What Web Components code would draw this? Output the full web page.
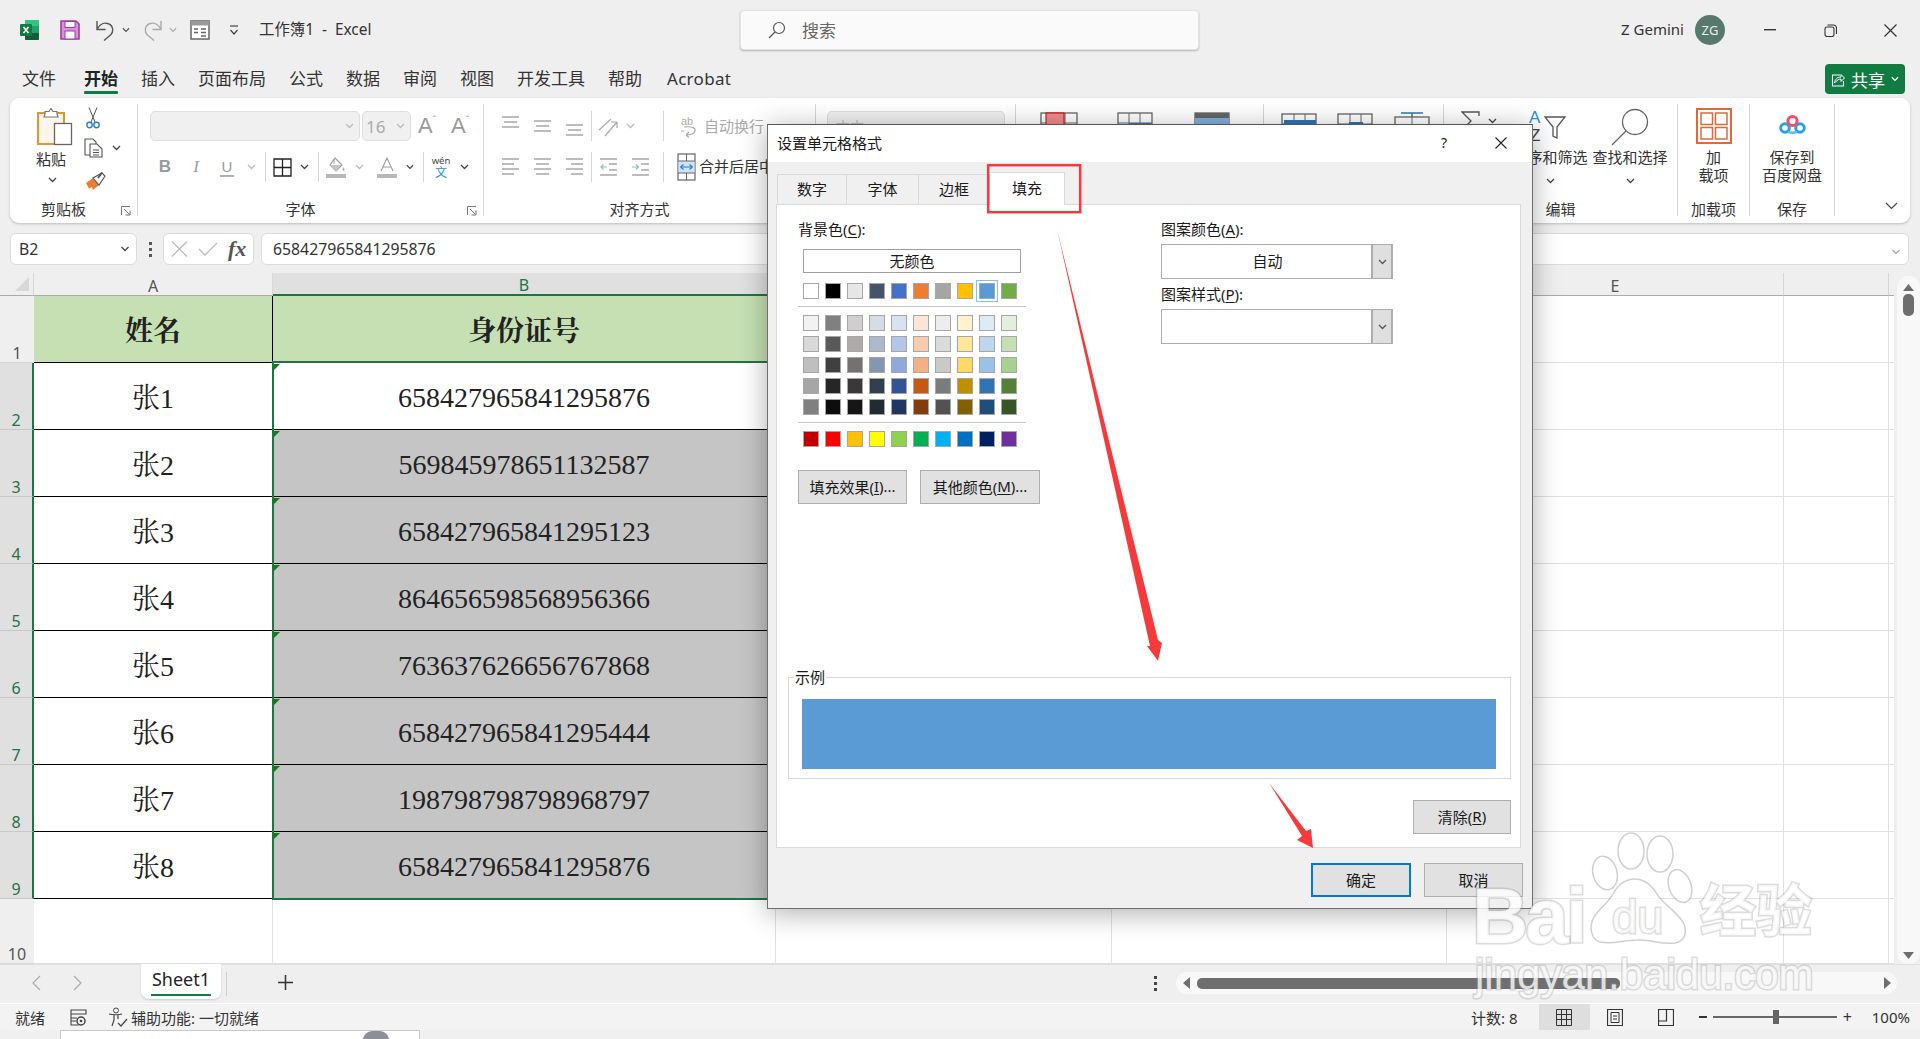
<!DOCTYPE html>
<html lang="zh-CN"><head><meta charset="utf-8"><title>工作簿1 - Excel</title>
<style>
html,body{margin:0;padding:0;width:1920px;height:1039px;overflow:hidden;background:#efefef}
body{font-family:"Noto Sans","Noto Sans CJK SC",sans-serif;color:#262626}
</style></head><body>
<x-app></x-app>
<script>
const F='"Noto Sans","Noto Sans CJK SC",sans-serif';
const chev=(c='#444',w=9)=>`<svg width="${w}" height="6" viewBox="0 0 9 6"><path d="M1 1l3.500 3.500L8 1" fill="none" stroke="${c}" stroke-width="1.300"/></svg>`;
const IC={
excel:`<svg width="20" height="20" viewBox="0 0 20 20"><rect x="5" y="0" width="14" height="20" rx="1" fill="#21a366"/><path d="M5 1a1 1 0 0 1 1-1h12a1 1 0 0 1 1 1v5H5z" fill="#33c481"/><path d="M5 13h14v6a1 1 0 0 1-1 1H6a1 1 0 0 1-1-1z" fill="#185c37"/><rect x="0" y="4" width="12" height="12" rx="1" fill="#107c41"/><path d="M3.500 7l5 6M8.500 7l-5 6" stroke="#fff" stroke-width="1.500"/></svg>`,
save:`<svg width="20" height="20" viewBox="0 0 20 20"><path d="M1 1h15l3 3v15H1z" fill="#d793d7" stroke="#a33ca3" stroke-width="1.600"/><rect x="5" y="1.500" width="10" height="6" fill="#fff" stroke="#a33ca3"/><rect x="5" y="11" width="10" height="8" fill="#fff" stroke="#a33ca3"/></svg>`,
undo:c=>`<svg width="20" height="21" viewBox="0 0 20 21"><path d="M2 1v8.500h8.500M2 9.500C5 4 9 2.500 12.500 3.500 18 5 19 10.500 16 14.500L9 20.500" fill="none" stroke="${c}" stroke-width="1.400"/></svg>`,
redo:c=>`<svg width="20" height="21" viewBox="0 0 20 21"><path d="M18 1v8.500H9.500M18 9.500C15 4 11 2.500 7.500 3.500 2 5 1 10.500 4 14.500l7 6" fill="none" stroke="${c}" stroke-width="1.400"/></svg>`,
form:`<svg width="20" height="20" viewBox="0 0 20 20"><rect x="1" y="1" width="18" height="18" fill="#fff" stroke="#666" stroke-width="1.500"/><rect x="1" y="1" width="18" height="4.500" fill="#999"/><path d="M4 9h4M11 9h5M4 12.500h4M11 12.500h5M11 16h5" stroke="#666" stroke-width="1.500"/></svg>`,
custom:`<svg width="10" height="11" viewBox="0 0 10 11"><path d="M1 1h8" stroke="#444" stroke-width="1.200"/><path d="M1.500 5l3.500 4 3.500-4" fill="none" stroke="#444" stroke-width="1.200"/></svg>`,
search:`<svg width="18" height="18" viewBox="0 0 18 18"><circle cx="11" cy="7" r="5.500" fill="none" stroke="#555" stroke-width="1.200"/><path d="M7 11l-6 6" stroke="#555" stroke-width="1.300"/></svg>`,
min:`<svg width="12" height="2"><rect width="12" height="1.400" fill="#333"/></svg>`,
restore:`<svg width="13" height="13" viewBox="0 0 13 13"><rect x="1" y="3" width="9" height="9.500" rx="2" fill="none" stroke="#333" stroke-width="1.100"/><path d="M3.500 1h6a3 3 0 0 1 3 3v6" fill="none" stroke="#333" stroke-width="1.100"/></svg>`,
close:`<svg width="13" height="13" viewBox="0 0 13 13"><path d="M.500.500l12 12M12.500.500l-12 12" stroke="#333" stroke-width="1.200"/></svg>`,
share:`<svg width="14" height="15" viewBox="0 0 14 15"><path d="M9 3H1.500v11h11V9" fill="none" stroke="#fff" stroke-width="1.100"/><path d="M3.500 11C4 7 6.500 5 10 5V2.500L13.500 6 10 9.500V7C8 7 6 8 3.500 11z" fill="#107c41" stroke="#fff" stroke-width="1"/></svg>`,
paste:`<svg width="36" height="38" viewBox="0 0 36 38"><rect x="1" y="5" width="26" height="31" fill="#fdf6ec" stroke="#e8912d" stroke-width="2"/><path d="M8 6V3.500h4L14 .500l2 3h4V6l1 3H7z" fill="#fff" stroke="#777" stroke-width="1.200"/><rect x="17.500" y="15.500" width="17" height="21" fill="#fff" stroke="#666" stroke-width="1.300"/></svg>`,
cut:`<svg width="16" height="22" viewBox="0 0 16 22"><path d="M4 .500L10 15M12 .500L6 15" stroke="#555" stroke-width="1"/><circle cx="4.500" cy="18" r="2.700" fill="none" stroke="#2b7cd3" stroke-width="1.400"/><circle cx="11.500" cy="18" r="2.700" fill="none" stroke="#2b7cd3" stroke-width="1.400"/></svg>`,
copy:`<svg width="20" height="20" viewBox="0 0 20 20"><path d="M1 1h8l3 3v13H1z" fill="#fff" stroke="#555" stroke-width="1.100"/><path d="M6 6h7l5 5v8H6z" fill="#fff" stroke="#555" stroke-width="1.100"/><path d="M9 12h6M9 14.500h6M9 17h6" stroke="#555"/></svg>`,
painter:`<svg width="21" height="20" viewBox="0 0 21 20"><path d="M1 12l7-5 6 7-6 5-1-3-3 1.500z" fill="#ed7d31"/><path d="M8 7l6 7 6-9-3-3z" fill="#fff" stroke="#555" stroke-width="1.100"/><path d="M13 7l4-5.500" stroke="#555" stroke-width="2"/></svg>`,
launch:`<svg width="10" height="10" viewBox="0 0 10 10"><path d="M.500 9V.500H9M3 3l5.500 5.500M9 4.500V9H4.500" fill="none" stroke="#777"/></svg>`,
borders:`<svg width="19" height="19" viewBox="0 0 19 19"><path d="M1 1h17v17H1zM9.500 1v17M1 9.500h17" fill="none" stroke="#222" stroke-width="1.300"/></svg>`,
bucket:`<svg width="20" height="21" viewBox="0 0 20 21"><path d="M9 1l7 7-6 6-6-6z" fill="#fff" stroke="#a0a0a0" stroke-width="1.200"/><path d="M8 2v5" stroke="#a0a0a0"/><path d="M4 8h11l-5 6z" fill="#c6c6c6"/><path d="M17 10c1 2 2 3 1 4-1 0-2-1-1-4z" fill="#a8a8a8"/><rect y="17" width="20" height="4" fill="#b8b8b8"/></svg>`,
fontc:`<svg width="20" height="21" viewBox="0 0 20 21"><path d="M4 14L10 1l6 13M6 10h8" fill="none" stroke="#9c9c9c" stroke-width="1.100"/><rect y="17" width="20" height="4" fill="#b8b8b8"/></svg>`,
abw:`<svg width="18" height="24" viewBox="0 0 18 24"><text x="1" y="11" font-family="Liberation Sans" font-size="11" fill="#aaa">ab</text><path d="M4 13c8-1 12 1 11 4s-4 4-9 4m0 0l3-3m-3 3l3 2.500M1 17h3" fill="none" stroke="#aaa" stroke-width="1.100"/></svg>`,
merge:`<svg width="19" height="28" viewBox="0 0 19 28"><rect x="1" y="1" width="17" height="26" fill="#fff" stroke="#666" stroke-width="1.200"/><rect x="1.500" y="8" width="16" height="12" fill="#cfe3f7"/><path d="M1 8h17M1 20h17M9.500 1v7M9.500 20v7" stroke="#666"/><path d="M3.500 14h12M3.500 14l3-2.500M3.500 14l3 2.500M15.500 14l-3-2.500M15.500 14l-3 2.500" fill="none" stroke="#2b7cd3" stroke-width="1.200"/></svg>`,
orient:`<svg width="22" height="24" viewBox="0 0 22 24"><path d="M2 16L14 5M8 22L20 8M20 8v6M20 8h-6" fill="none" stroke="#aaa" stroke-width="1.200"/></svg>`,
sigma:`<svg width="19" height="20" viewBox="0 0 19 20"><path d="M18 5V1H1l9 9-9 9h17v-4" fill="none" stroke="#555" stroke-width="1.300"/></svg>`,
azf:`<svg width="42" height="38" viewBox="0 0 42 38"><text x="0" y="15" font-family="Liberation Sans" font-size="17" fill="#2b8fd8">A</text><text x="1" y="33" font-family="Liberation Sans" font-size="17" fill="#444">Z</text><path d="M16 9h20L28 19v11l-4-2v-9z" fill="#fff" stroke="#555" stroke-width="1.300"/></svg>`,
find:`<svg width="38" height="38" viewBox="0 0 38 38"><circle cx="24" cy="14" r="12.500" fill="none" stroke="#666" stroke-width="1.300"/><path d="M15 23L1 37" stroke="#666" stroke-width="1.300"/></svg>`,
addin:`<svg width="36" height="36" viewBox="0 0 36 36"><rect x="1" y="1" width="34" height="34" fill="none" stroke="#e0693c" stroke-width="2"/><g fill="#fff" stroke="#e0693c" stroke-width="1.500"><rect x="5" y="5" width="11.500" height="11.500"/><rect x="19.500" y="5" width="11.500" height="11.500"/><rect x="5" y="19.500" width="11.500" height="11.500"/><rect x="19.500" y="19.500" width="11.500" height="11.500"/></g></svg>`,
baidu:`<svg width="27" height="21" viewBox="0 0 27 21"><circle cx="6" cy="14" r="4.300" fill="none" stroke="#2aa0e8" stroke-width="3"/><circle cx="21" cy="14" r="4.300" fill="none" stroke="#2aa0e8" stroke-width="3"/><path d="M9 18c3 1 6 1 9 0" stroke="#5cc0f0" stroke-width="2.500" fill="none"/><circle cx="13.500" cy="7" r="4.600" fill="none" stroke="#ef4f6c" stroke-width="3"/></svg>`,
st:(b)=>`<svg width="38" height="34" viewBox="0 0 38 34">${b}</svg>`,
};
class Base extends HTMLElement{
  constructor(){super();const C=this.constructor;
    this.attachShadow({mode:'open'}).innerHTML=`<style>*{box-sizing:border-box}${C.css||''}</style>${C.html||''}`;}
}
class XTitle extends Base{
static css=`:host{display:flex;height:60px;align-items:center;font-size:15.400px;color:#333}
.l{flex:0 0 740px;display:flex;align-items:center;padding-left:20px}
.l span{display:flex;align-items:center}
.s{flex:0 0 459px;height:40px;background:#fafafa;border-radius:4px;box-shadow:0 1px 2px rgba(0,0,0,.25);border:1px solid #e3e3e3;display:flex;align-items:center;padding-left:27px;gap:16px;color:#666;font-size:17px}
.s span{padding-bottom:2px}
.r{flex:1;display:flex;align-items:center;justify-content:flex-end}
.u{margin-right:11px;font-size:15px;padding-bottom:2px}
.a{width:30px;height:30px;border-radius:50%;background:#56786d;color:#e6efec;font-size:13px;display:flex;align-items:center;justify-content:center;margin-right:15px}
.w{width:60px;display:flex;justify-content:center}`;
static html=`<div class="l"><span>${IC.excel}</span><span style="margin-left:20px">${IC.save}</span><span style="margin-left:15px">${IC.undo('#555')}</span><span style="margin-left:7px">${chev('#555',8)}</span><span style="margin-left:13px">${IC.redo('#aaa')}</span><span style="margin-left:6px">${chev('#aaa',8)}</span><span style="margin-left:13px">${IC.form}</span><span style="margin-left:19px">${IC.custom}</span><span style="margin-left:20px;padding-bottom:3px">工作簿1&nbsp; - &nbsp;Excel</span></div>
<div class="s">${IC.search}<span>搜索</span></div>
<div class="r"><span class="u">Z Gemini</span><span class="a">ZG</span><span class="w">${IC.min}</span><span class="w">${IC.restore}</span><span class="w">${IC.close}</span></div>`;
}
class XMenu extends Base{
static css=`:host{display:flex;height:38px;align-items:center;padding-left:22px;font-size:17px;color:#333;gap:23px}
.t{position:relative;line-height:24px;white-space:nowrap}
.on{font-weight:700;color:#222}
.on::after{content:"";position:absolute;left:0;right:0;bottom:-3px;height:3px;background:#107c41;border-radius:1px}
.sh{margin-left:auto;margin-right:15px;width:80px;height:30px;background:#107c41;border-radius:4px;color:#fff;display:flex;align-items:center;justify-content:center;gap:6px;font-size:17px}`;
static html=`<span class="t" style="margin-right:5px">文件</span><span class="t on">开始</span><span class="t">插入</span><span class="t">页面布局</span><span class="t">公式</span><span class="t">数据</span><span class="t">审阅</span><span class="t">视图</span><span class="t">开发工具</span><span class="t" style="margin-right:2px">帮助</span><span class="t" style="letter-spacing:.3px">Acrobat</span>
<div class="sh">${IC.share}<span>共享</span>${chev('#fff',8)}</div>`;
}
class XGroup extends Base{
static css=`:host{display:flex;flex-direction:column;height:112px;border-right:1px solid #d6d6d6;flex:none;font-size:15px;color:#333}
.c{flex:1;min-height:0;display:flex;flex-direction:column}
.b{height:18px;display:flex;align-items:center;margin-bottom:-2px;line-height:18px}
.lb{flex:1;text-align:center;white-space:nowrap}
.lc{width:20px;display:flex;align-items:flex-end;height:14px;padding-left:4px}`;
static html=`<div class="c"><slot></slot></div><div class="b"><span class="lb"></span><span class="lc"></span></div>`;
connectedCallback(){const r=this.shadowRoot;r.querySelector('.lb').textContent=this.getAttribute('label')||'';
 if(this.hasAttribute('launcher'))r.querySelector('.lc').innerHTML=IC.launch;else r.querySelector('.lc').remove();}
}
const cell=(w,h)=>`<span class="i" style="width:${w}px">${h}</span>`;
const dv=w=>`<span class="i" style="width:${w}px"><i class="dv"></i></span>`;
const lines=(kind,pos)=>{
 const ys={t:[2,7,12],m:[6,11,16],b:[10,15,20]}[pos];
 return `<svg width="19" height="22" viewBox="0 0 19 22"><path d="M1 ${ys[0]}h17M3 ${ys[1]}h13M1 ${ys[2]}h17" stroke="#a8a8a8" stroke-width="1.300"/></svg>`};
const hl=a=>{const p=a=='l'?[[1,17],[1,12],[1,17],[1,12]]:a=='c'?[[1,17],[3,13],[1,17],[3,13]]:[[1,17],[6,12],[1,17],[6,12]];
 return `<svg width="19" height="22" viewBox="0 0 19 22"><path d="${p.map((q,i)=>`M${q[0]} ${3+i*5}h${q[1]}`).join('')}" stroke="#a8a8a8" stroke-width="1.300"/></svg>`};
const ind=d=>`<svg width="19" height="22" viewBox="0 0 19 22"><path d="M1 3h17M1 19h17M10 8h8M10 14h8" stroke="#a8a8a8" stroke-width="1.300"/><path d="${d?'M1 11h6M5 8.500l2.500 2.500L5 13.500':'M8 11H2M4.500 8.500L2 11l2.500 2.500'}" fill="none" stroke="#8fb8dd" stroke-width="1.200"/></svg>`;
class XRibbon extends Base{
static css=`:host{display:flex;height:125px;margin:0 10px;background:#fff;border-radius:9px;box-shadow:0 1px 3px rgba(0,0,0,.22);padding:6px 0 7px;font-size:15px;color:#333}
.row{display:flex;align-items:center;height:30px;flex:none}
.r1{margin-top:7px}.r2{margin-top:11px}
.i{display:flex;align-items:center;justify-content:center;height:30px;flex:none;position:relative}
.dv{display:block;width:1px;height:30px;background:#d6d6d6}
.combo{height:30px;background:#f0f0f0;border:1px solid #dedede;border-radius:5px;display:flex;align-items:center;justify-content:flex-end;padding-right:5px;flex:none;color:#aaa;font-size:17px}
.big{display:flex;flex-direction:column;align-items:center;flex:none;line-height:18px;white-space:nowrap}
.ico{height:44px;display:flex;align-items:flex-start;justify-content:center;padding-top:4px}
.col{display:flex;flex-direction:column;align-items:center;flex:none}
.B{font:700 17px "Liberation Sans";color:#9a9a9a}.I{font:italic 17px "Liberation Serif";color:#9a9a9a}.U{font:15px "Liberation Sans";color:#9a9a9a;border-bottom:2px solid #b0b0b0;line-height:17px;padding:0 2px}
.g{color:#aaa;white-space:nowrap}.d{white-space:nowrap}
.up{font:22px "Liberation Sans";color:#9a9a9a}.up small{font-size:10px;vertical-align:9px}
.wen{display:flex;flex-direction:column;align-items:center;font-size:9.500px;line-height:11px;color:#444}.wen b{font-weight:400;font-size:12px;color:#2b8fd8;line-height:13px}
.end{flex:1;display:flex;align-items:flex-end;justify-content:flex-end;padding:0 12px 6px 0}`;
static html=`
<x-group label="剪贴板" launcher style="width:128px"><div style="display:flex">
  <div class="big" style="width:80px;padding-left:10px;align-items:flex-start"><div class="ico" style="padding-left:17px;height:46px">${IC.paste}</div><span style="margin-left:16px">粘贴</span><span style="margin-left:28px;margin-top:2px;line-height:14px">${chev()}</span></div>
  <div class="col" style="width:40px;align-items:flex-start;padding-top:3px"><span style="height:26px;margin-left:-5px">${IC.cut}</span><span style="height:30px;display:flex;align-items:center;gap:8px;margin-left:-6px">${IC.copy}${chev()}</span><span style="margin-left:-5px;padding-top:8px">${IC.painter}</span></div>
</div></x-group>
<x-group label="字体" launcher style="width:346px">
  <div class="row r1" style="padding-left:12px"><span class="combo" style="width:210px">${chev('#bbb')}</span><span class="combo" style="width:49px;margin-left:2px;justify-content:space-between;padding-left:3px;">16${chev('#bbb')}</span>${cell(32,'<span class="up">A<small>ˆ</small></span>')}${cell(34,'<span class="up">A<small>ˇ</small></span>')}</div>
  <div class="row r2" style="padding-left:12px">${cell(30,'<span class="B">B</span>')}${cell(32,'<span class="I">I</span>')}${cell(30,'<span class="U">U</span>')}${cell(18,chev('#bbb'))}${dv(10)}${cell(24,IC.borders)}${cell(20,chev())}${dv(8)}${cell(28,IC.bucket)}${cell(18,chev('#bbb'))}${cell(38,IC.fontc)}${cell(8,chev('#444',8))}${dv(18)}${cell(18,'<span class="wen">wén<b>文</b></span>')}${cell(28,chev())}</div>
</x-group>
<x-group label="对齐方式" launcher style="width:332px">
  <div class="row r1" style="padding-left:10px">${cell(32,lines(0,'t'))}${cell(32,lines(0,'m'))}${cell(32,lines(0,'b'))}${dv(2)}${cell(32,IC.orient)}${cell(12,chev('#bbb'))}${dv(54)}<span class="i" style="width:22px;margin-left:-12px;margin-right:4px">${IC.abw}</span><span class="g" style="padding-bottom:2px">自动换行</span></div>
  <div class="row r2" style="padding-left:10px">${cell(32,hl('l'))}${cell(32,hl('c'))}${cell(32,hl('r'))}${dv(2)}${cell(32,ind(0))}${cell(32,ind(1))}${dv(14)}<span class="i" style="width:26px;margin-left:3px">${IC.merge}</span><span class="d" style="padding-bottom:3px">合并后居中</span></div>
</x-group>
<x-group style="width:200px"><div class="row r1" style="padding-left:11px"><span class="combo" style="width:178px;justify-content:flex-start;padding-left:8px;font-size:14px;color:#bbb">文本</span></div></x-group>
<x-group style="width:248px"><div style="display:flex;padding:8px 0 0 24px;gap:39px">
  ${IC.st('<rect x="1" y="1" width="36" height="32" fill="none" stroke="#666" stroke-width="1.300"/><path d="M12 1v32M25 1v32M1 11h36" stroke="#666"/><rect x="6" y="1" width="18" height="18" fill="#f08a8a" stroke="#c00"/><rect x="6" y="19" width="18" height="14" fill="#2e75b6"/>')}
  ${IC.st('<rect x="1" y="1" width="34" height="32" fill="none" stroke="#666" stroke-width="1.300"/><path d="M12 1v32M23 1v32M1 11h34" stroke="#666"/><rect x="12" y="11" width="22" height="10" fill="#2e75b6"/>')}
  ${IC.st('<rect x="1" y="1" width="34" height="32" fill="none" stroke="#666" stroke-width="1.300"/><rect x="1" y="1" width="34" height="5" fill="#666"/><rect x="1" y="6" width="34" height="14" fill="#7fb0dd"/>')}
</div></x-group>
<x-group style="width:180px"><div style="display:flex;padding:8px 0 0 17px;gap:18px">
  ${IC.st('<rect x="1" y="2" width="34" height="30" fill="none" stroke="#666" stroke-width="1.300"/><path d="M13 2v30M24 2v30M1 12h34" stroke="#666"/><rect x="3" y="8" width="32" height="8" fill="#2e75b6"/>')}
  ${IC.st('<rect x="1" y="2" width="34" height="30" fill="none" stroke="#666" stroke-width="1.300"/><path d="M13 2v30M24 2v30M1 12h34" stroke="#666"/><rect x="12" y="10" width="14" height="12" fill="#2e75b6"/><path d="M26 12l8 10M34 12l-8 10" stroke="#d33" stroke-width="1.300"/>')}
  ${IC.st('<path d="M8 1h22M19 1v4" stroke="#2e75b6" stroke-width="1.500"/><rect x="2" y="5" width="34" height="28" fill="none" stroke="#666" stroke-width="1.300"/><path d="M19 5v28M2 13h34" stroke="#666"/><rect x="11" y="13" width="16" height="10" fill="#2e75b6"/>')}
</div></x-group>
<x-group label="编辑" style="width:234px"><div style="display:flex">
  <div style="width:67px;display:flex;align-items:center;height:32px;padding-left:17px;gap:8px;margin-top:1px;flex:none">${IC.sigma}${chev()}</div>
  <div class="big" style="width:78px"><div class="ico">${IC.azf}</div><span>排序和筛选</span><span style="line-height:24px">${chev()}</span></div>
  <div class="big" style="width:78px;margin-left:2px"><div class="ico">${IC.find}</div><span>查找和选择</span><span style="line-height:24px">${chev()}</span></div>
</div></x-group>
<x-group label="加载项" style="width:72px"><div class="big"><div class="ico">${IC.addin}</div><span>加</span><span>载项</span></div></x-group>
<x-group label="保存" style="width:85px"><div class="big"><div class="ico" style="padding-top:10px">${IC.baidu}</div><span>保存到</span><span>百度网盘</span></div></x-group>
<div class="end"><svg width="13" height="8" viewBox="0 0 13 8"><path d="M1 1l5.500 5.500L12 1" fill="none" stroke="#444" stroke-width="1.200"/></svg></div>`;
}
class XFormula extends Base{
static css=`:host{display:flex;height:32px;margin:10px 11px 8px 10px;font-size:15.800px;color:#333}
.b{background:#fff;border:1px solid #dcdcdc;border-radius:6px;display:flex;align-items:center;height:32px}
.n{width:127px;padding:0 5px 0 8px;justify-content:space-between}
.dots{width:26px;display:flex;flex-direction:column;align-items:center;justify-content:center;gap:3px}.dots i{width:3px;height:3px;background:#555;display:block}
.fx{width:91px;padding-left:7px;gap:10px}
.f{flex:1;margin-left:7px;padding:0 11px;justify-content:space-between}
.fxt{font:italic 700 22px "Liberation Serif";color:#555;line-height:22px}`;
static html=`<div class="b n"><span>B2</span>${chev('#444',12)}</div><div class="dots"><i></i><i></i><i></i></div>
<div class="b fx"><svg width="17" height="16" viewBox="0 0 17 16"><path d="M1 .500l15 15M16 .500l-15 15" stroke="#bbb" stroke-width="1.300"/></svg><svg width="20" height="14" viewBox="0 0 20 14"><path d="M1 7l6 6L19 1" fill="none" stroke="#bbb" stroke-width="1.300"/></svg><span class="fxt">fx</span></div>
<div class="b f"><span>658427965841295876</span><span style="margin-right:-5px">${chev('#aaa',12)}</span></div>`;
}
class XSheet extends Base{
static css=`:host{display:flex;height:691px;position:relative;flex:none}
.g{display:grid;width:1894px;grid-template-columns:34px 239px 503px 336px 335px 337px 105px 5px;grid-template-rows:23px repeat(9,67px) 65px;background:#fff}
.c{border-right:1px solid #e0e0e0;border-bottom:1px solid #e0e0e0;display:flex;align-items:center;justify-content:center;font:28px "Liberation Serif","Noto Serif CJK SC","Noto Sans CJK SC",serif;color:#222;padding-top:3px;position:relative;background:#fff}
.k{border-right:1px solid #000;border-bottom:1px solid #000}
.nm{padding-top:0}
.hd{background:#c6e0b4;font-weight:700;padding-top:0}
.gy{background:#c5c5c5}
.tri::before{content:"";position:absolute;left:1px;top:1px;border-top:6px solid #117a11;border-right:6px solid transparent}
.ch{background:#efefef;border-bottom:1px solid #ababab;border-right:1px solid #d6d6d6;font:16px ${F};color:#555;display:flex;align-items:flex-end;justify-content:center;line-height:18px}
.ch.s{background:#e0e0e0;border-bottom:2px solid #217346;color:#217346}
.rh{background:#efefef;border-bottom:1px solid #d6d6d6;font:16px ${F};color:#555;display:flex;align-items:flex-end;justify-content:center;line-height:18px}
.rh.s{background:#e0e0e0;color:#217346;border-right:2px solid #217346;border-bottom-color:#c8c8c8}
.cn{background:#efefef;display:flex;align-items:flex-end;justify-content:flex-end;padding:0 3px 3px 0;border-bottom:1px solid #ababab;border-right:1px solid #d6d6d6}
.sel{position:absolute;left:272px;top:88px;width:504px;height:539px;border:2px solid #217346;pointer-events:none}
.vs{width:26px;display:flex;flex-direction:column;align-items:center;background:#efefef}
.tr{margin:3px 0 0 3px;width:23px;flex:1;background:#f8f8f8;border-radius:11px;display:flex;flex-direction:column;align-items:center;padding:8px 0 5px}
.th{width:11px;height:22px;background:#6e6e6e;border-radius:5px;margin-top:3px}`;
static html=`<div class="g" id="g"></div><div class="sel"></div><div class="vs"><div class="tr"><svg width="11" height="7"><path d="M5.500 0L11 7H0z" fill="#6e6e6e"/></svg><div class="th"></div><div style="flex:1"></div><svg width="11" height="7"><path d="M5.500 7L11 0H0z" fill="#6e6e6e"/></svg></div></div>`;
connectedCallback(){
 const data=[['姓名','身份证号'],['张1','658427965841295876'],['张2','569845978651132587'],['张3','658427965841295123'],['张4','864656598568956366'],['张5','763637626656767868'],['张6','658427965841295444'],['张7','198798798798968797'],['张8','658427965841295876']];
 let h=`<div class="cn"><svg width="16" height="16"><path d="M15 1v14H1z" fill="#d8d8d8"/></svg></div>`;
 ['A','B','C','D','E','',''].forEach((t,i)=>h+=`<div class="ch${i==1?' s':''}"${i==6?' style="border-right:0"':''}>${t}</div>`);
 for(let r=0;r<10;r++){
  h+=`<div class="rh${r>=1&&r<=8?' s':''}">${r+1}</div>`;
  for(let c=0;c<7;c++){
   let cls='c',t='';
   if(r<9&&c<2){cls+=' k';t=data[r][c];if(r==0)cls+=' hd';else if(c==0)cls+=' nm';else{cls+=' tri';if(r>1)cls+=' gy';}}
   if(c==6)cls+='" style="border-right:0';
   h+=`<div class="${cls}">${t}</div>`;
  }
 }
 this.shadowRoot.getElementById('g').innerHTML=h;
}
}
class XTabs extends Base{
static css=`:host{display:flex;height:39px;align-items:flex-start;position:relative;flex:none;background:#efefef;border-top:1px solid #e0e0e0;font-size:18px;color:#222}
.nav{width:141px;display:flex;padding-left:32px;gap:32px;height:36px;align-items:center}
.tab{width:80px;height:35px;margin-top:-1px;background:#fff;border-radius:0 0 8px 8px;box-shadow:0 1px 2px rgba(0,0,0,.15);position:relative;display:flex;justify-content:center;padding-top:2px;line-height:26px}
.tab::after{content:"";position:absolute;left:10px;right:10px;bottom:3px;height:2px;background:#107c41}
.sp{width:1px;height:24px;margin:7px 0 0 5px;background:#d0d0d0}
.pl{margin:10px 0 0 51px}
.rg{margin-left:auto;display:flex;align-items:center;height:36px}
.dots{display:flex;flex-direction:column;gap:3px;margin-right:19px}.dots i{display:block;width:3px;height:3px;background:#444}
.hs{width:721px;height:22px;background:#f8f8f8;border-radius:11px;display:flex;align-items:center;padding:0 6px 0 7px;margin-right:23px;margin-top:0}
.th{width:423px;height:11px;background:#6e6e6e;border-radius:5px;margin-left:7px}`;
static html=`<div class="nav"><svg width="9" height="16" viewBox="0 0 9 16"><path d="M8 1L1 8l7 7" fill="none" stroke="#aaa" stroke-width="1.200"/></svg><svg width="9" height="16" viewBox="0 0 9 16"><path d="M1 1l7 7-7 7" fill="none" stroke="#aaa" stroke-width="1.200"/></svg></div>
<div class="tab">Sheet1</div><div class="sp"></div>
<svg class="pl" width="15" height="15" viewBox="0 0 15 15"><path d="M7.500 0v15M0 7.500h15" stroke="#333" stroke-width="1.500"/></svg>
<div class="rg"><div class="dots"><i></i><i></i><i></i></div><div class="hs"><svg width="7" height="12"><path d="M0 6l7-6v12z" fill="#6e6e6e"/></svg><div class="th"></div><div style="flex:1"></div><svg width="7" height="12"><path d="M7 6L0 0v12z" fill="#6e6e6e"/></svg></div></div>`;
}
class XStatus extends Base{
static css=`:host{display:flex;height:27px;background:#f3f3f3;align-items:center;font-size:15px;color:#333;padding-left:15px;flex:none;border-top:1px solid #fff}
.a{display:flex;align-items:center}
.r{margin-left:auto;display:flex;align-items:center;height:100%}
.vb{width:51px;height:26px;display:flex;align-items:center;justify-content:center}
.on{background:#dedede}
.sl{width:124px;height:2px;background:#666;position:relative;margin:0 6px}
.sl i{position:absolute;left:60px;top:-6px;width:6px;height:14px;background:#666}`;
static html=`<span>就绪</span>
<span class="a" style="margin-left:25px"><svg width="17" height="17" viewBox="0 0 17 17"><path d="M1 1h15v4H1zM1 5v11h8M1 9h6M1 12h5" fill="none" stroke="#444" stroke-width="1.100"/><circle cx="11" cy="12" r="4" fill="none" stroke="#444" stroke-width="1.500"/><circle cx="11" cy="12" r="1.300" fill="#444"/></svg></span>
<span class="a" style="margin-left:21px;gap:3px"><svg width="20" height="20" viewBox="0 0 20 20"><circle cx="8" cy="3.500" r="2.500" fill="none" stroke="#444"/><path d="M1 7c3 1 11 1 13 0M6 8v5l-2 6M10 8v4" fill="none" stroke="#444" stroke-width="1.200"/><path d="M10 16l3 3 6-7" fill="none" stroke="#444" stroke-width="1.200"/></svg>辅助功能: 一切就绪</span>
<div class="r"><span style="margin-right:21px">计数: 8</span>
<span class="vb on"><svg width="16" height="17" viewBox="0 0 16 17"><path d="M.500.500h15v16H.500zM5.500.500v16M10.500.500v16M.500 5.500h15M.500 10.500h15" fill="none" stroke="#333"/></svg></span>
<span class="vb"><svg width="16" height="17" viewBox="0 0 16 17"><path d="M.500.500h15v16H.500z" fill="none" stroke="#333" stroke-width="1.200"/><path d="M4 3.500h8v10H4zM6 7h4M6 10h4" fill="none" stroke="#333"/></svg></span>
<span class="vb"><svg width="16" height="17" viewBox="0 0 16 17"><path d="M.500.500h15v16H.500zM.500 12h8V.500" fill="none" stroke="#333" stroke-width="1.200"/></svg></span>
<span style="width:8px;height:1.500px;background:#333;margin-left:7px"></span><span class="sl"><i></i></span><span style="font-size:16px;line-height:16px">+</span><span style="margin:0 10px 0 20px">100%</span></div>`;
}
class XBottom extends Base{
static css=`:host{display:block;height:9px;background:#f0f0f0;position:relative;flex:none;padding-left:60px}
.b{width:360px;height:9px;background:#fff;border:1px solid #c8c8c8;border-bottom:0;display:flex;justify-content:flex-end;padding-right:30px}
.c{width:26px;height:9px;border-radius:13px 13px 0 0;background:#8b8f96}`;
static html=`<div class="b"><div class="c"></div></div>`;
}
class XDialog extends Base{
static css=`:host{position:absolute;left:767px;top:124px;width:766px;height:785px;background:#f0f0f0;border:1px solid #6f6f6f;border-top-color:#555;box-shadow:0 4px 26px rgba(0,0,0,.32);display:flex;flex-direction:column;font-size:15px;color:#1a1a1a;z-index:5}
.tb{height:37px;background:#fff;display:flex;align-items:center;padding:0 0 2px 9px;font-size:15px;flex:none}
.tb .q{margin-left:auto;font-size:14px;margin-right:48px}.tb svg{margin-right:25px}
.tabs{display:flex;height:42px;padding-left:9px;align-items:flex-end;flex:none;position:relative;z-index:1}
.t{height:30px;border:1px solid #d9d9d9;border-bottom:0;border-left:0;display:flex;align-items:center;justify-content:center;background:#f0f0f0;padding-bottom:2px}
.t.on{height:33px;margin-bottom:-1px;background:#fff;border-top:1px solid #d9d9d9;padding-bottom:3px}
.p{margin-left:8px;width:745px;height:644px;background:#fff;border:1px solid #d9d9d9;display:flex;flex-direction:column;flex:none}
.top{height:472px;padding:15px 0 0 21px;display:flex;flex:none}
.lc{width:363px;flex:none}.rc{width:232px;flex:none}
.lab{line-height:18px;height:18px;white-space:nowrap}
u{text-underline-offset:2px}
.none{margin:11px 0 0 5px;width:218px;height:24px;border:1px solid #a0a0a0;display:flex;align-items:center;justify-content:center;padding-bottom:2px}
.sw{display:grid;grid-template-columns:repeat(10,16px);column-gap:6px;row-gap:5px;margin-left:5px}
.sw i{display:block;width:16px;height:16px;border:1px solid #a6a6a6;position:relative}
.sw i.x{outline:1px solid #7cc0f5;outline-offset:2px;background-clip:padding-box}
.sep{width:228px;height:1px;background:#c6c6c6}
.btn{background:#e1e1e1;border:1px solid #adadad;display:flex;align-items:center;justify-content:center;white-space:nowrap;flex:none;padding-bottom:2px}
.sel{width:232px;height:35px;border:1px solid #adadad;display:flex;margin-top:6px}
.sel .v{flex:1;display:flex;align-items:center;justify-content:center;padding:0 0 2px 2px}
.sel .ar{width:21px;background:#dfdfdf;border-left:2px solid #adadad;border-right:1px solid #adadad;display:flex;align-items:center;justify-content:center}
.grp{margin-left:11px;width:723px;height:102px;border:1px solid #d9d9d9;padding:21px 14px 0 13px;position:relative;flex:none}
.grp span{position:absolute;left:5px;top:-11px;background:#fff;padding:0 1px;line-height:20px}
.fill{height:70px;background:#5b9bd5}
.ft{display:flex;justify-content:flex-end;gap:13px;margin:15px 9px 0 0}`;
static html=`<div class="tb"><span>设置单元格格式</span><span class="q">?</span><svg width="12" height="12" viewBox="0 0 12 12"><path d="M.500.500l11 11M11.500.500l-11 11" stroke="#222" stroke-width="1.100"/></svg></div>
<div class="tabs"><span class="t" style="width:70px;border-left:1px solid #d9d9d9">数字</span><span class="t" style="width:72px">字体</span><span class="t" style="width:71px">边框</span><span class="t on" style="width:75px">填充</span></div>
<div class="p"><div class="top">
 <div class="lc"><div class="lab">背景色(<u>C</u>):</div><div class="none">无颜色</div>
  <div class="sw" id="a" style="margin-top:10px"></div><div class="sep" style="margin-top:7px"></div>
  <div class="sw" id="b" style="margin-top:8px"></div><div class="sep" style="margin-top:7px"></div>
  <div class="sw" id="c" style="margin-top:8px"></div>
  <div style="display:flex;gap:13px;margin-top:23px"><div class="btn" style="width:109px;height:34px">填充效果(<u>I</u>)...</div><div class="btn" style="width:120px;height:34px">其他颜色(<u>M</u>)...</div></div></div>
 <div class="rc"><div class="lab">图案颜色(<u>A</u>):</div><div class="sel"><span class="v">自动</span><span class="ar">${chev('#555')}</span></div>
  <div class="lab" style="margin-top:6px">图案样式(<u>P</u>):</div><div class="sel"><span class="v"></span><span class="ar">${chev('#555')}</span></div></div>
</div>
<div class="grp"><span>示例</span><div class="fill"></div></div>
<div class="btn" style="width:98px;height:34px;margin:21px 9px 0 auto">清除(<u>R</u>)</div></div>
<div class="ft"><div class="btn" style="width:100px;height:34px;border:2px solid #0078d7">确定</div><div class="btn" style="width:99px;height:34px">取消</div></div>`;
connectedCallback(){
 const A=['#ffffff','#000000','#e7e6e6','#44546a','#4472c4','#ed7d31','#a5a5a5','#ffc000','#5b9bd5','#70ad47'];
 const B=['#f2f2f2','#808080','#d0cece','#d6dce4','#d9e1f2','#fce4d6','#ededed','#fff2cc','#ddebf7','#e2efda',
 '#d9d9d9','#595959','#aeaaaa','#acb9ca','#b4c6e7','#f8cbad','#dbdbdb','#ffe699','#bdd7ee','#c6e0b4',
 '#bfbfbf','#404040','#757171','#8497b0','#8ea9db','#f4b084','#c9c9c9','#ffd966','#9bc2e6','#a9d08e',
 '#a6a6a6','#262626','#3a3838','#333f4f','#305496','#c65911','#7b7b7b','#bf8f00','#2f75b5','#548235',
 '#808080','#0d0d0d','#161616','#222b35','#203764','#833c0c','#525252','#806000','#1f4e78','#375623'];
 const C=['#c00000','#ff0000','#ffc000','#ffff00','#92d050','#00b050','#00b0f0','#0070c0','#002060','#7030a0'];
 const r=this.shadowRoot,p=(id,l)=>r.getElementById(id).innerHTML=l.map((c,i)=>`<i style="background:${c}" class="${id=='a'&&i==8?'x':''}"></i>`).join('');
 p('a',A);p('b',B);p('c',C);
}
}
class XMarks extends Base{
static css=`:host{position:absolute;left:0;top:0;z-index:6;pointer-events:none}
svg{display:block;position:absolute;left:0;top:0}
.wm{position:absolute;white-space:nowrap;color:rgba(255,255,255,.8);-webkit-text-stroke:3px rgba(140,140,140,.3);paint-order:stroke fill;line-height:1;font-family:"Liberation Sans","Noto Sans CJK SC",sans-serif}`;
static html=`<svg width="1920" height="1039" viewBox="0 0 1920 1039">
<polygon points="1057,229 1158,640 1162,643 1158,661 1147,646 1150,646" fill="#f63a3c"/>
<polygon points="1269,783 1306,831 1311,829 1313,848 1297,840 1302,836" fill="#f63a3c"/>
<rect x="988.200" y="165.200" width="92" height="47" fill="none" stroke="#f33b3d" stroke-width="2.500"/>
<g fill="rgba(255,255,255,.75)" stroke="rgba(130,130,130,.38)" stroke-width="1.500"><ellipse cx="1631" cy="851" rx="13" ry="18"/><ellipse cx="1660" cy="854" rx="13" ry="18"/><ellipse cx="1605" cy="873" rx="12" ry="17" transform="rotate(-15 1605 873)"/><ellipse cx="1680" cy="886" rx="11" ry="17" transform="rotate(-20 1680 886)"/><path d="M1600 942c-8-2-12-14-6-25 6-9 14-14 19-23 6-11 14-15 22-15 10 0 18 8 22 15 6 10 18 16 26 28 5 10 2 19-8 21-14 2-24-4-38-3-14 0-24 5-37 2z"/></g></svg>
<span class="wm" style="left:1472px;top:877px;font-size:78px;font-weight:700;letter-spacing:-3px">Bai</span>
<span class="wm" style="left:1612px;top:894px;font-size:46px">du</span>
<span class="wm" style="left:1700px;top:884px;font-size:56px;font-weight:700">经验</span>
<span class="wm" style="left:1475px;top:954px;font-size:42px">jingyan.baidu.com</span>`;
}
class XApp extends Base{
static css=`:host{display:flex;flex-direction:column;width:1920px;height:1039px;position:relative;overflow:hidden;background:#efefef;font-family:${F}}`;
static html=`<x-title></x-title><x-menu></x-menu><x-ribbon></x-ribbon><x-formula></x-formula><x-sheet></x-sheet><x-tabs></x-tabs><x-status></x-status><x-bottom></x-bottom><x-dialog></x-dialog><x-marks></x-marks>`;
}
Object.entries({'x-title':XTitle,'x-menu':XMenu,'x-group':XGroup,'x-ribbon':XRibbon,'x-formula':XFormula,'x-sheet':XSheet,'x-tabs':XTabs,'x-status':XStatus,'x-bottom':XBottom,'x-dialog':XDialog,'x-marks':XMarks,'x-app':XApp}).forEach(([k,v])=>customElements.define(k,v));
</script></body></html>
